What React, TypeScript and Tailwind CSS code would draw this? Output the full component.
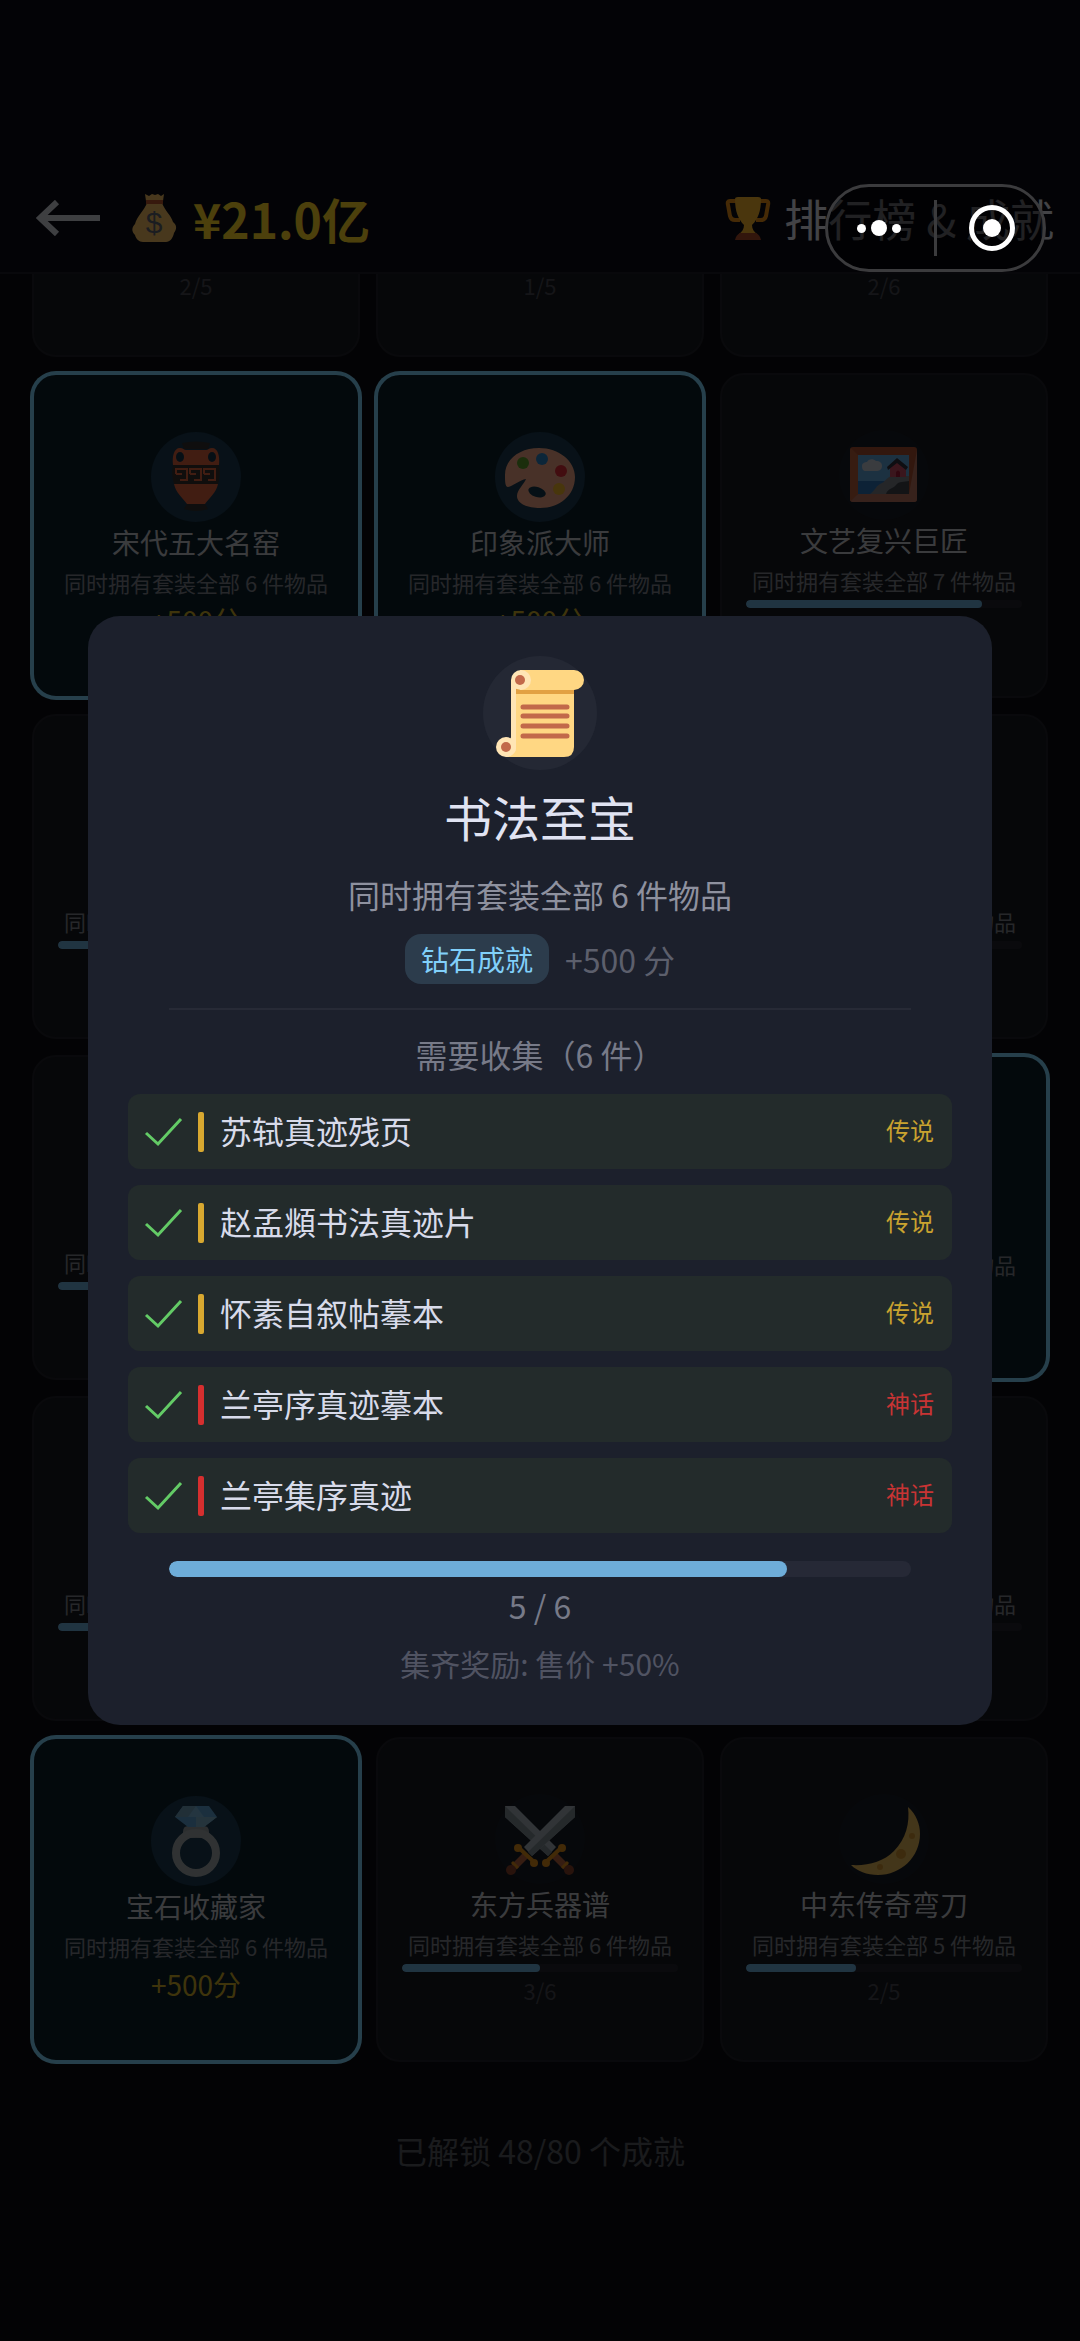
import React from 'react';
import clsx from 'clsx';

type IconType = React.ElementType;

type Achievement = {
  id: number;
  name?: string;
  icon?: IconType;
  desc?: string;
  unlocked?: boolean;
  points?: number;
  have?: number;
  total?: number;
  showCount?: boolean;
};

type Item = {
  name: string;
  rarity: 'legend' | 'myth';
};

const MoneyBag = () => (
  <svg viewBox="0 0 48 48" className="h-12 w-12" aria-hidden="true">
    <path d="M14 0l4 2 3-2 3 1 3-1 3 2 3-2-1 7H15z" fill="#f2bd62" />
    <path d="M16 9h15c3 8 9 12 11 19 4 3 4 7 1 11-1 5-4 9-8 9H12c-4 0-7-3-8-7-4-4-3-8 0-11 2-8 9-13 12-21z" fill="#f2bd62" />
    <path d="M15 6h17v4H15z" fill="#b8552e" />
    <text x="23" y="39" textAnchor="middle" fontSize="30" fontFamily="Liberation Sans, sans-serif" fill="#5d6270">$</text>
  </svg>
);

const Trophy = () => (
  <svg viewBox="0 0 48 48" className="h-12 w-12" aria-hidden="true">
    <path d="M12 7H6q-3 0-2 4l2 11q1 4 5 4h5M36 7h6q3 0 2 4l-2 11q-1 4-5 4h-5" fill="none" stroke="#e88d14" strokeWidth="4" />
    <path d="M11 5q0-2 3-2h20q3 0 3 2c0 12-3 20-9 26 0 4 2 7 5 9H15c3-2 5-5 5-9-6-6-9-14-9-26z" fill="#f9b42c" />
    <path d="M16 39h16q4 2 5 7H11q1-5 5-7z" fill="#a84a2b" />
  </svg>
);

const Vase = () => (
  <svg viewBox="0 0 72 72" className="h-[72px] w-[72px]" aria-hidden="true">
    <path d="M22 2q14-3 28 0l-2 6H24z" fill="#33302f" />
    <path d="M13 24c-1-9 1-17 7-17 3 0 4 2 6 2h20c2 0 3-2 6-2 6 0 8 8 7 17z" fill="#d9623c" />
    <ellipse cx="20" cy="16" rx="4" ry="5" fill="#173548" />
    <ellipse cx="52" cy="16" rx="4" ry="5" fill="#173548" />
    <path d="M13 24h46q2 9-1 19H14q-3-10-1-19z" fill="#38302d" />
    <g fill="none" stroke="#d9623c" strokeWidth="2">
      <path d="M16 33v-5h11v11h-7M16 33h6" />
      <path d="M30 33v-5h11v11h-7M30 33h6" />
      <path d="M44 33v-5h11v11h-7M44 33h6" />
    </g>
    <path d="M14 43h44c-2 9-8 13-13 20H27c-5-7-11-11-13-20z" fill="#d9623c" />
    <path d="M27 63h18l3 5q-12 4-24 0z" fill="#33302f" />
  </svg>
);

const Palette = () => (
  <svg viewBox="0 0 72 72" className="h-[72px] w-[72px]" aria-hidden="true">
    <path d="M1 34C1 18 16 7 35 7c20 0 36 13 36 29 0 18-15 31-35 31-12 0-23-4-23-12 0-6 7-12 9-17-6 1-13 7-18 8-3 0-3-6-3-12z" fill="#f0a585" />
    <ellipse cx="33" cy="51" rx="9" ry="5" transform="rotate(18 33 51)" fill="#16374c" />
    <circle cx="19" cy="22" r="6" fill="#5a9c2b" />
    <circle cx="38" cy="18" r="6" fill="#2b80c0" />
    <circle cx="57" cy="30" r="6" fill="#dc2c38" />
    <circle cx="55" cy="48" r="6" fill="#f0b428" />
  </svg>
);

const Picture = () => (
  <svg viewBox="0 0 72 72" className="h-[72px] w-[72px]" aria-hidden="true">
    <rect x="2" y="8" width="67" height="55" rx="3" fill="#a84e30" />
    <path d="M2 60L10 55h51L69 11v49q0 3-3 3H5q-3 0-3-3z" fill="#b87460" />
    <path d="M3 9l7 7v39l-7 7q-1-1-1-2V11z" fill="#b85f3a" />
    <rect x="10" y="16" width="51" height="39" fill="#5fa3da" />
    <path d="M10 42h30v13H10z" fill="#2e73b5" />
    <path d="M14 27c0-3 3-4 5-4 1-3 6-4 9-1 4 0 6 2 6 5 0 4-3 5-6 5H18c-3 0-4-2-4-5z" fill="#c4c8d2" />
    <path d="M22 55c5-3 6-9 12-11 4-2 5-7 12-7h15v18z" fill="#7c8088" />
    <path d="M38 55c2-6 7-5 10-9 3-4 8-3 13-4v13z" fill="#40444c" />
    <path d="M42 38v-9l8-8 8 8v9z" fill="#c24a62" />
    <path d="M48 38v-5q2-3 4 0v5z" fill="#a01a36" />
    <path d="M40 31l-1-3 10-9 11 9-2 3-9-7z" fill="#30303c" />
  </svg>
);

const Ring = () => (
  <svg viewBox="0 0 72 72" className="h-[72px] w-[72px]" aria-hidden="true">
    <path d="M23 27q0-6 5-6h16q5 0 5 6v6H23z" fill="#959c9f" />
    <circle cx="36" cy="48" r="20" fill="none" stroke="#a0a8aa" strokeWidth="8" />
    <path d="M23 1h26l8 11-13 10H28L15 12z" fill="#5b9fd0" />
    <path d="M23 1h13v11H15z" fill="#6f9db8" />
    <path d="M36 12h21L44 22h-8z" fill="#7dadc8" />
    <path d="M28 12h16l-8-11z" fill="#78b2d8" />
  </svg>
);

const SwordShape = () => (
  <>
    <path d="M1 3h10l41 41-8 9L1 14z" fill="#a3afb7" />
    <path d="M1 3l47 46-4 4L1 14z" fill="#7e8a92" />
    <path d="M50 52l12 12" stroke="#b5623f" strokeWidth="7" />
    <path d="M58 65l6-6" stroke="#dc8c1a" strokeWidth="3" />
    <path d="M42 59l15-14" stroke="#dc8c1a" strokeWidth="4" />
    <circle cx="42" cy="60" r="4" fill="#dc8c1a" />
    <circle cx="58" cy="45" r="4" fill="#dc8c1a" />
    <circle cx="65" cy="67" r="5" fill="#88412a" />
  </>
);

const Swords = () => (
  <svg viewBox="0 0 72 72" className="h-[72px] w-[72px]" aria-hidden="true">
    <SwordShape />
    <g transform="translate(72 0) scale(-1 1)">
      <SwordShape />
    </g>
  </svg>
);

const Moon = () => (
  <svg viewBox="0 0 72 72" className="h-[72px] w-[72px]" aria-hidden="true">
    <path d="M60 4c8 7 12 17 12 27 0 23-19 41-42 41-11 0-21-4-27-10 17 1 32-3 43-14C58 36 62 20 60 4z" fill="#e0b458" />
    <circle cx="53" cy="51" r="5" fill="#cc922f" />
    <circle cx="64" cy="33" r="3" fill="#cc922f" />
    <circle cx="32" cy="64" r="3" fill="#cc922f" />
  </svg>
);

const Scroll = () => (
  <svg viewBox="0 0 88 88" className="h-[88px] w-[88px]" aria-hidden="true">
    <path d="M16 12h62v66q0 10-10 10H10l6-10z" fill="#ffd783" />
    <path d="M15 11h5v68q0 7-10 9l5-20z" fill="#ffe5b5" />
    <path d="M20 20h58v5H20z" fill="#e2a143" />
    <path d="M24 1h54a10 10 0 010 20H24z" fill="#ffd783" />
    <circle cx="25" cy="11" r="10" fill="#ffe5b5" />
    <circle cx="24" cy="11" r="5" fill="#c2694a" />
    <circle cx="10" cy="78" r="10" fill="#ffe5b5" />
    <circle cx="10" cy="78" r="5" fill="#c2694a" />
    <path d="M27 38h44M27 47h44M27 57h44M27 67h44" stroke="#c2694a" strokeWidth="5" strokeLinecap="round" />
  </svg>
);

const achievements: Achievement[] = [
  { id: 1, have: 2, total: 5, showCount: true },
  { id: 2, have: 1, total: 5, showCount: true },
  { id: 3, have: 2, total: 6, showCount: true },
  { id: 4, name: '宋代五大名窑', icon: Vase, desc: '同时拥有套装全部 6 件物品', unlocked: true, points: 500 },
  { id: 5, name: '印象派大师', icon: Palette, desc: '同时拥有套装全部 6 件物品', unlocked: true, points: 500 },
  { id: 6, name: '文艺复兴巨匠', icon: Picture, desc: '同时拥有套装全部 7 件物品', have: 6, total: 7 },
  { id: 7, desc: '同时拥有套装全部 6 件物品', have: 3, total: 6 },
  { id: 8 },
  { id: 9, desc: '同时拥有套装全部 6 件物品', have: 3, total: 6 },
  { id: 10, desc: '同时拥有套装全部 6 件物品', have: 3, total: 6 },
  { id: 11 },
  { id: 12, desc: '同时拥有套装全部 6 件物品', unlocked: true },
  { id: 13, desc: '同时拥有套装全部 6 件物品', have: 3, total: 6 },
  { id: 14 },
  { id: 15, desc: '同时拥有套装全部 6 件物品', have: 3, total: 6 },
  { id: 16, name: '宝石收藏家', icon: Ring, desc: '同时拥有套装全部 6 件物品', unlocked: true, points: 500 },
  { id: 17, name: '东方兵器谱', icon: Swords, desc: '同时拥有套装全部 6 件物品', have: 3, total: 6, showCount: true },
  { id: 18, name: '中东传奇弯刀', icon: Moon, desc: '同时拥有套装全部 5 件物品', have: 2, total: 5, showCount: true },
];

const items: Item[] = [
  { name: '苏轼真迹残页', rarity: 'legend' },
  { name: '赵孟頫书法真迹片', rarity: 'legend' },
  { name: '怀素自叙帖摹本', rarity: 'legend' },
  { name: '兰亭序真迹摹本', rarity: 'myth' },
  { name: '兰亭集序真迹', rarity: 'myth' },
];

const AchievementCard = ({ data }: { data: Achievement }) => {
  const Icon = data.icon;
  return (
    <button
      type="button"
      aria-label={data.name ?? '成就'}
      className={clsx(
        'flex h-[325px] flex-col items-center justify-center rounded-3xl border-2',
        data.unlocked ? 'border-[#81d4fa] bg-[#0c1f2b] ring-2 ring-[#81d4fa]' : 'border-[#1f2128] bg-[#17181e]'
      )}
    >
      <span
        className={clsx(
          'flex h-[90px] w-[90px] items-center justify-center rounded-full',
          data.unlocked ? 'bg-[#1b3a50]' : 'bg-[#171d26]'
        )}
      >
        {Icon && <Icon />}
      </span>
      <span className="mt-0.5 h-9 text-[28px] leading-9 text-[#c4c6cc]">{data.name}</span>
      <span className="mt-1.5 h-8 text-[22px] leading-8 whitespace-nowrap text-[#80838c]">{data.desc}</span>
      {data.unlocked ? (
        <span className="mt-0.5 h-10 text-[28px] leading-10 text-[#cfae2a]">
          {data.points && `+${data.points}分`}
        </span>
      ) : (
        <>
          <span className="mt-1 h-2 w-[85%] overflow-hidden rounded-full bg-[#22242c]">
            <span
              className="block h-full rounded-full bg-[#6caedb]"
              style={{ width: `${((data.have ?? 0) / (data.total ?? 1)) * 100}%` }}
            />
          </span>
          <span className="mt-0.5 h-8 text-[22px] leading-8 text-[#464953]">
            {data.showCount && `${data.have}/${data.total}`}
          </span>
        </>
      )}
    </button>
  );
};

const Header = () => (
  <header className="fixed inset-x-0 top-0 z-10 border-b-2 border-[#1b1d25] bg-[#0a0d17] pt-[164px]">
    <div className="flex h-[108px] items-center pr-[26px] pl-9">
      <button type="button" aria-label="返回" className="h-9 w-16">
        <svg viewBox="0 0 64 36" className="h-9 w-16">
          <path d="M64 18H5M21 2L4 18l17 16" fill="none" stroke="#d0d2da" strokeWidth="6" />
        </svg>
      </button>
      <div className="ml-[31px] flex items-center gap-[14px]">
        <MoneyBag />
        <span className="text-5xl leading-[60px] font-bold text-[#ffd52a]">¥21.0亿</span>
      </div>
      <h1 className="ml-auto flex items-center gap-3 text-[44px] leading-[60px] text-[#e0e1ea]">
        <Trophy />
        排行榜 &amp; 成就
      </h1>
    </div>
  </header>
);

const Capsule = () => (
  <div className="fixed top-[184px] right-[34px] z-30 flex h-[88px] w-[221px] items-center rounded-full border-[3px] border-[#3b3b3d] bg-black/50">
    <button type="button" aria-label="更多" className="flex flex-1 items-center justify-center gap-[5px] pr-1">
      <span className="h-[9px] w-[9px] rounded-full bg-white" />
      <span className="h-4 w-4 rounded-full bg-white" />
      <span className="h-[9px] w-[9px] rounded-full bg-white" />
    </button>
    <span className="h-14 w-[3px] bg-[#3b3b3d]" />
    <button type="button" aria-label="关闭" className="flex flex-1 items-center justify-center pl-1">
      <span className="flex h-[46px] w-[46px] items-center justify-center rounded-full border-[5px] border-white">
        <span className="h-[18px] w-[18px] rounded-full bg-white" />
      </span>
    </button>
  </div>
);

const ItemRow = ({ item }: { item: Item }) => {
  const legend = item.rarity === 'legend';
  return (
    <li className="flex h-[75px] items-center rounded-xl bg-[#232b2b] pr-[18px] pl-4">
      <svg viewBox="0 0 40 32" className="h-8 w-10" aria-hidden="true">
        <path d="M2 17l12 11L37 3" fill="none" stroke="#63cb66" strokeWidth="3" />
      </svg>
      <span className={clsx('ml-[14px] h-10 w-[6px] rounded-xs', legend ? 'bg-[#d8a830]' : 'bg-[#d52f2f]')} />
      <span className="ml-4 flex-1 pb-1 text-[32px] leading-10 text-[#d8dbea]">{item.name}</span>
      <span className={clsx('pb-1 text-2xl', legend ? 'text-[#c9a22f]' : 'text-[#c83434]')}>
        {legend ? '传说' : '神话'}
      </span>
    </li>
  );
};

const AchievementDialog = () => (
  <div className="fixed inset-0 z-20 flex items-center justify-center bg-black/70 px-[88px]">
    <div
      role="dialog"
      aria-modal="true"
      aria-labelledby="dialog-title"
      className="flex w-full flex-col items-center rounded-[32px] bg-[#1c202c] px-10 py-10"
    >
      <div className="flex h-[114px] w-[114px] items-center justify-center rounded-full bg-[#242834]">
        <Scroll />
      </div>
      <h2 id="dialog-title" className="mt-3 text-5xl leading-[68px] text-[#e0e3f2]">书法至宝</h2>
      <p className="mt-5 text-[32px] leading-[48px] text-[#8e919f]">同时拥有套装全部 6 件物品</p>
      <div className="mt-4 flex items-center gap-4">
        <span className="rounded-2xl bg-[#2c3c4c] px-4 text-[28px] leading-[50px] text-[#81d0fa]">钻石成就</span>
        <span className="text-[32px] leading-[50px] text-[#5c5f6c]">+500 分</span>
      </div>
      <hr className="mt-6 w-[90%] border-t-2 border-[#272a36]" />
      <h3 className="mt-5 text-[32px] leading-[48px] text-[#777a88]">需要收集（6 件）</h3>
      <ul className="mt-4 flex w-full flex-col gap-4">
        {items.map((item) => (
          <ItemRow key={item.name} item={item} />
        ))}
      </ul>
      <div className="mt-7 h-4 w-[90%] overflow-hidden rounded-full bg-[#262936]">
        <div className="h-full rounded-full bg-[#6eadd9]" style={{ width: `${(5 / 6) * 100}%` }} />
      </div>
      <p className="mt-1 text-[32px] leading-[48px] text-[#777a88]">5 / 6</p>
      <p className="mt-3 text-[30px] leading-[44px] text-[#505362]">集齐奖励: 售价 +50%</p>
    </div>
  </div>
);

const App = () => (
  <div className="min-h-screen bg-[#0d0d12] font-['Noto_Sans_CJK_SC',sans-serif]">
    <Header />
    <main className="px-8 pt-8">
      <div className="grid grid-cols-3 gap-4">
        {achievements.map((a) => (
          <AchievementCard key={a.id} data={a} />
        ))}
      </div>
      <p className="mt-16 text-center text-[32px] leading-[48px] text-[#585a62]">已解锁 48/80 个成就</p>
    </main>
    <AchievementDialog />
    <Capsule />
  </div>
);

export default App;
